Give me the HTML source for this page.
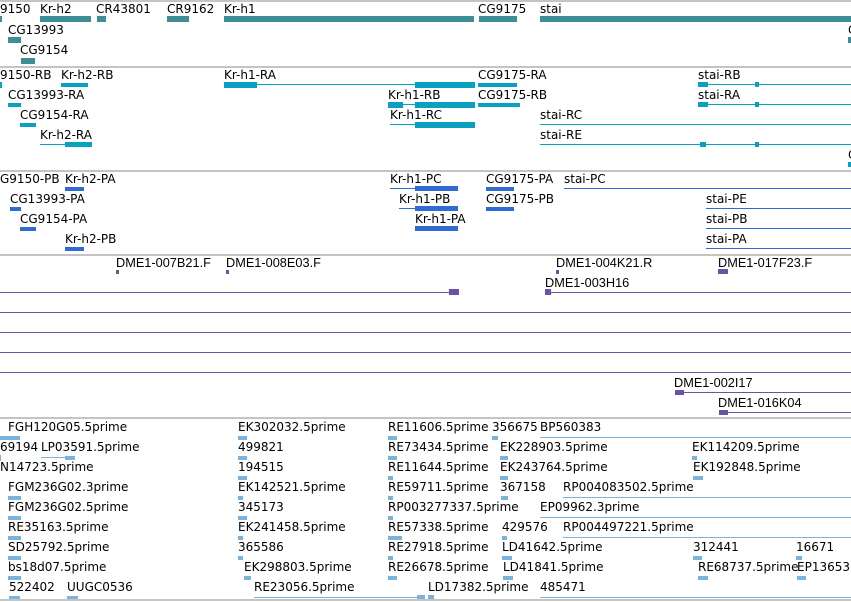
<!DOCTYPE html>
<html><head><meta charset="utf-8"><style>
body{margin:0;width:851px;height:602px;background:#fff;position:relative;overflow:hidden;font-family:"DejaVu Sans","Liberation Sans",sans-serif;}
.t{position:absolute;font-size:12px;line-height:14px;color:#000;white-space:nowrap;}
.d{position:absolute;font-family:"Liberation Sans",sans-serif;font-size:13px;line-height:14px;white-space:nowrap;transform:scaleX(0.98);transform-origin:0 0;}
.s{position:absolute;left:0;width:851px;height:2px;background:#c4c4c4;}
.b{position:absolute;}
.g{background:#3e8f95;height:6px}
.r{background:#0aa0c0}
.p{background:#2f6bd0}
.m{background:#6a52a8}
.e{background:#7ab4dc}
</style></head><body>
<div class="s" style="top:0"></div>
<div class="s" style="top:66px"></div>
<div class="s" style="top:170px"></div>
<div class="s" style="top:254px"></div>
<div class="s" style="top:417px"></div>
<div class="s" style="top:599px"></div>

<!-- track 1 -->
<div class="t" style="left:0;top:2px">9150</div><div class="b g" style="left:0;top:16px;width:2px"></div>
<div class="t" style="left:40px;top:2px">Kr-h2</div><div class="b g" style="left:40px;top:16px;width:51px"></div>
<div class="t" style="left:96px;top:2px">CR43801</div><div class="b g" style="left:97px;top:16px;width:9px"></div>
<div class="t" style="left:167px;top:2px">CR9162</div><div class="b g" style="left:167px;top:16px;width:22px"></div>
<div class="t" style="left:224px;top:2px">Kr-h1</div><div class="b g" style="left:224px;top:16px;width:250px"></div>
<div class="t" style="left:478px;top:2px">CG9175</div><div class="b g" style="left:479px;top:16px;width:38px"></div>
<div class="t" style="left:540px;top:2px">stai</div><div class="b g" style="left:540px;top:16px;width:311px"></div>
<div class="t" style="left:8px;top:23px">CG13993</div><div class="b g" style="left:8px;top:37px;width:13px"></div>
<div class="t" style="left:848px;top:23px">C</div><div class="b g" style="left:848px;top:37px;width:3px"></div>
<div class="t" style="left:20px;top:43px">CG9154</div><div class="b g" style="left:21px;top:58px;width:14px"></div>

<!-- track 2 -->
<div class="t" style="left:0;top:68px">9150-RB</div><div class="b r" style="left:0;top:82px;width:2px;height:6px"></div>
<div class="t" style="left:61px;top:68px">Kr-h2-RB</div><div class="b r" style="left:61px;top:83px;width:27px;height:4px"></div>
<div class="t" style="left:224px;top:68px">Kr-h1-RA</div><div class="b r" style="left:224px;top:82px;width:33px;height:6px"></div><div class="b r" style="left:257px;top:84px;width:158px;height:1px"></div><div class="b r" style="left:415px;top:82px;width:60px;height:6px"></div>
<div class="t" style="left:478px;top:68px">CG9175-RA</div><div class="b r" style="left:478px;top:83px;width:39px;height:4px"></div>
<div class="t" style="left:698px;top:68px">stai-RB</div><div class="b r" style="left:698px;top:82px;width:10px;height:5px"></div><div class="b r" style="left:698px;top:84px;width:153px;height:1px"></div><div class="b r" style="left:755px;top:82px;width:4px;height:5px"></div>

<div class="t" style="left:8px;top:88px">CG13993-RA</div><div class="b r" style="left:8px;top:103px;width:13px;height:4px"></div>
<div class="t" style="left:388px;top:88px">Kr-h1-RB</div><div class="b r" style="left:388px;top:102px;width:15px;height:6px"></div><div class="b r" style="left:403px;top:104px;width:12px;height:1px"></div><div class="b r" style="left:415px;top:102px;width:60px;height:6px"></div>
<div class="t" style="left:478px;top:88px">CG9175-RB</div><div class="b r" style="left:478px;top:103px;width:42px;height:4px"></div>
<div class="t" style="left:698px;top:88px">stai-RA</div><div class="b r" style="left:698px;top:102px;width:10px;height:5px"></div><div class="b r" style="left:698px;top:104px;width:153px;height:1px"></div><div class="b r" style="left:755px;top:102px;width:4px;height:5px"></div>

<div class="t" style="left:20px;top:108px">CG9154-RA</div><div class="b r" style="left:20px;top:123px;width:16px;height:4px"></div>
<div class="t" style="left:390px;top:108px">Kr-h1-RC</div><div class="b r" style="left:390px;top:124px;width:25px;height:1px"></div><div class="b r" style="left:415px;top:122px;width:60px;height:6px"></div>
<div class="t" style="left:540px;top:108px">stai-RC</div><div class="b r" style="left:540px;top:124px;width:311px;height:1px"></div>

<div class="t" style="left:40px;top:128px">Kr-h2-RA</div><div class="b r" style="left:40px;top:144px;width:25px;height:1px"></div><div class="b r" style="left:65px;top:142px;width:27px;height:5px"></div>
<div class="t" style="left:540px;top:128px">stai-RE</div><div class="b r" style="left:540px;top:144px;width:311px;height:1px"></div><div class="b r" style="left:700px;top:142px;width:6px;height:5px"></div><div class="b r" style="left:755px;top:142px;width:4px;height:5px"></div>
<div class="t" style="left:848px;top:148px">C</div><div class="b r" style="left:848px;top:162px;width:3px;height:5px"></div>

<!-- track 3 -->
<div class="t" style="left:0;top:172px">G9150-PB</div>
<div class="t" style="left:65px;top:172px">Kr-h2-PA</div><div class="b p" style="left:65px;top:187px;width:19px;height:4px"></div>
<div class="t" style="left:390px;top:172px">Kr-h1-PC</div><div class="b p" style="left:390px;top:188px;width:25px;height:1px"></div><div class="b p" style="left:415px;top:186px;width:43px;height:5px"></div>
<div class="t" style="left:486px;top:172px">CG9175-PA</div><div class="b p" style="left:486px;top:187px;width:28px;height:4px"></div>
<div class="t" style="left:564px;top:172px">stai-PC</div><div class="b p" style="left:564px;top:188px;width:287px;height:1px"></div>
<div class="t" style="left:10px;top:192px">CG13993-PA</div><div class="b p" style="left:10px;top:207px;width:11px;height:4px"></div>
<div class="t" style="left:399px;top:192px">Kr-h1-PB</div><div class="b p" style="left:399px;top:208px;width:16px;height:1px"></div><div class="b p" style="left:415px;top:206px;width:43px;height:5px"></div>
<div class="t" style="left:486px;top:192px">CG9175-PB</div><div class="b p" style="left:486px;top:207px;width:28px;height:4px"></div>
<div class="t" style="left:706px;top:192px">stai-PE</div><div class="b p" style="left:706px;top:208px;width:145px;height:1px"></div>
<div class="t" style="left:20px;top:212px">CG9154-PA</div><div class="b p" style="left:20px;top:227px;width:16px;height:4px"></div>
<div class="t" style="left:415px;top:212px">Kr-h1-PA</div><div class="b p" style="left:415px;top:226px;width:43px;height:5px"></div>
<div class="t" style="left:706px;top:212px">stai-PB</div><div class="b p" style="left:706px;top:228px;width:145px;height:1px"></div>
<div class="t" style="left:65px;top:232px">Kr-h2-PB</div><div class="b p" style="left:65px;top:247px;width:19px;height:4px"></div>
<div class="t" style="left:706px;top:232px">stai-PA</div><div class="b p" style="left:706px;top:248px;width:145px;height:1px"></div>

<!-- track 4 -->
<div class="d" style="left:116px;top:256px">DME1-007B21.F</div><div class="b m" style="left:116px;top:270px;width:3px;height:4px"></div>
<div class="d" style="left:226px;top:256px">DME1-008E03.F</div><div class="b m" style="left:226px;top:270px;width:3px;height:4px"></div>
<div class="d" style="left:556px;top:256px">DME1-004K21.R</div><div class="b m" style="left:556px;top:270px;width:3px;height:4px"></div>
<div class="d" style="left:718px;top:256px">DME1-017F23.F</div><div class="b m" style="left:718px;top:269px;width:10px;height:5px"></div>
<div class="d" style="left:545px;top:276px">DME1-003H16</div>
<div class="b m" style="left:0;top:292px;width:459px;height:1px"></div><div class="b m" style="left:449px;top:289px;width:10px;height:6px"></div>
<div class="b m" style="left:545px;top:292px;width:306px;height:1px"></div><div class="b m" style="left:545px;top:289px;width:6px;height:6px"></div>
<div class="b m" style="left:0;top:312px;width:851px;height:1px"></div>
<div class="b m" style="left:0;top:332px;width:851px;height:1px"></div>
<div class="b m" style="left:0;top:352px;width:851px;height:1px"></div>
<div class="b m" style="left:0;top:372px;width:851px;height:1px"></div>
<div class="d" style="left:674px;top:376px">DME1-002I17</div><div class="b m" style="left:675px;top:392px;width:176px;height:1px"></div><div class="b m" style="left:675px;top:390px;width:9px;height:5px"></div>
<div class="d" style="left:718px;top:396px">DME1-016K04</div><div class="b m" style="left:719px;top:412px;width:132px;height:1px"></div><div class="b m" style="left:719px;top:410px;width:9px;height:5px"></div>

<!-- track 5 -->
<div class="t" style="left:8px;top:420px">FGH120G05.5prime</div><div class="b e" style="left:0;top:436px;width:20px;height:4px"></div>
<div class="t" style="left:238px;top:420px">EK302032.5prime</div><div class="b e" style="left:238px;top:436px;width:9px;height:4px"></div>
<div class="t" style="left:388px;top:420px">RE11606.5prime</div><div class="b e" style="left:388px;top:436px;width:9px;height:4px"></div>
<div class="t" style="left:492px;top:420px">356675</div><div class="b e" style="left:492px;top:436px;width:6px;height:4px"></div>
<div class="t" style="left:540px;top:420px">BP560383</div><div class="b e" style="left:540px;top:437px;width:311px;height:1px"></div>

<div class="t" style="left:0;top:440px">69194</div><div class="b e" style="left:0;top:455px;width:1px;height:6px"></div>
<div class="t" style="left:41px;top:440px">LP03591.5prime</div><div class="b e" style="left:41px;top:457px;width:34px;height:1px"></div><div class="b e" style="left:65px;top:456px;width:10px;height:4px"></div>
<div class="t" style="left:238px;top:440px">499821</div><div class="b e" style="left:238px;top:456px;width:9px;height:4px"></div>
<div class="t" style="left:388px;top:440px">RE73434.5prime</div><div class="b e" style="left:388px;top:456px;width:9px;height:4px"></div>
<div class="t" style="left:500px;top:440px">EK228903.5prime</div><div class="b e" style="left:500px;top:456px;width:8px;height:4px"></div>
<div class="t" style="left:692px;top:440px">EK114209.5prime</div><div class="b e" style="left:692px;top:456px;width:5px;height:4px"></div>

<div class="t" style="left:0;top:460px">N14723.5prime</div>
<div class="t" style="left:238px;top:460px">194515</div><div class="b e" style="left:238px;top:476px;width:9px;height:4px"></div>
<div class="t" style="left:388px;top:460px">RE11644.5prime</div><div class="b e" style="left:388px;top:476px;width:5px;height:4px"></div>
<div class="t" style="left:500px;top:460px">EK243764.5prime</div><div class="b e" style="left:500px;top:476px;width:8px;height:4px"></div>
<div class="t" style="left:693px;top:460px">EK192848.5prime</div><div class="b e" style="left:693px;top:476px;width:10px;height:4px"></div>

<div class="t" style="left:8px;top:480px">FGM236G02.3prime</div><div class="b e" style="left:8px;top:496px;width:13px;height:4px"></div>
<div class="t" style="left:238px;top:480px">EK142521.5prime</div><div class="b e" style="left:238px;top:496px;width:5px;height:4px"></div>
<div class="t" style="left:388px;top:480px">RE59711.5prime</div><div class="b e" style="left:388px;top:496px;width:5px;height:4px"></div>
<div class="t" style="left:500px;top:480px">367158</div><div class="b e" style="left:501px;top:496px;width:7px;height:4px"></div>
<div class="t" style="left:563px;top:480px">RP004083502.5prime</div><div class="b e" style="left:563px;top:497px;width:288px;height:1px"></div>

<div class="t" style="left:8px;top:500px">FGM236G02.5prime</div><div class="b e" style="left:8px;top:516px;width:13px;height:4px"></div>
<div class="t" style="left:238px;top:500px">345173</div><div class="b e" style="left:238px;top:516px;width:9px;height:4px"></div>
<div class="t" style="left:388px;top:500px">RP003277337.5prime</div><div class="b e" style="left:388px;top:516px;width:5px;height:4px"></div>
<div class="t" style="left:540px;top:500px">EP09962.3prime</div><div class="b e" style="left:540px;top:517px;width:311px;height:1px"></div>

<div class="t" style="left:8px;top:520px">RE35163.5prime</div><div class="b e" style="left:8px;top:536px;width:13px;height:4px"></div>
<div class="t" style="left:238px;top:520px">EK241458.5prime</div><div class="b e" style="left:238px;top:536px;width:5px;height:4px"></div>
<div class="t" style="left:388px;top:520px">RE57338.5prime</div><div class="b e" style="left:388px;top:536px;width:14px;height:4px"></div>
<div class="t" style="left:502px;top:520px">429576</div><div class="b e" style="left:502px;top:536px;width:5px;height:4px"></div>
<div class="t" style="left:563px;top:520px">RP004497221.5prime</div><div class="b e" style="left:563px;top:537px;width:288px;height:1px"></div>

<div class="t" style="left:8px;top:540px">SD25792.5prime</div><div class="b e" style="left:8px;top:556px;width:13px;height:4px"></div>
<div class="t" style="left:238px;top:540px">365586</div><div class="b e" style="left:238px;top:556px;width:5px;height:4px"></div>
<div class="t" style="left:388px;top:540px">RE27918.5prime</div><div class="b e" style="left:388px;top:556px;width:5px;height:4px"></div>
<div class="t" style="left:502px;top:540px">LD41642.5prime</div><div class="b e" style="left:502px;top:556px;width:10px;height:4px"></div>
<div class="t" style="left:693px;top:540px">312441</div><div class="b e" style="left:693px;top:556px;width:9px;height:4px"></div>
<div class="t" style="left:796px;top:540px">16671</div><div class="b e" style="left:796px;top:556px;width:6px;height:4px"></div>

<div class="t" style="left:8px;top:560px">bs18d07.5prime</div><div class="b e" style="left:8px;top:576px;width:13px;height:4px"></div>
<div class="t" style="left:244px;top:560px">EK298803.5prime</div><div class="b e" style="left:244px;top:576px;width:7px;height:4px"></div>
<div class="t" style="left:388px;top:560px">RE26678.5prime</div><div class="b e" style="left:388px;top:576px;width:9px;height:4px"></div>
<div class="t" style="left:503px;top:560px">LD41841.5prime</div><div class="b e" style="left:503px;top:576px;width:10px;height:4px"></div>
<div class="t" style="left:698px;top:560px">RE68737.5prime</div><div class="b e" style="left:698px;top:576px;width:10px;height:4px"></div>
<div class="t" style="left:797px;top:560px">EP13653</div><div class="b e" style="left:797px;top:576px;width:9px;height:4px"></div>

<div class="t" style="left:9px;top:580px">522402</div><div class="b e" style="left:9px;top:596px;width:11px;height:3px"></div>
<div class="t" style="left:67px;top:580px">UUGC0536</div><div class="b e" style="left:67px;top:596px;width:11px;height:3px"></div>
<div class="t" style="left:254px;top:580px">RE23056.5prime</div><div class="b e" style="left:254px;top:597px;width:171px;height:1px"></div><div class="b e" style="left:417px;top:595px;width:8px;height:4px"></div>
<div class="t" style="left:428px;top:580px">LD17382.5prime</div><div class="b e" style="left:428px;top:595px;width:6px;height:4px"></div>
<div class="t" style="left:540px;top:580px">485471</div><div class="b e" style="left:540px;top:597px;width:311px;height:1px"></div>
</body></html>
